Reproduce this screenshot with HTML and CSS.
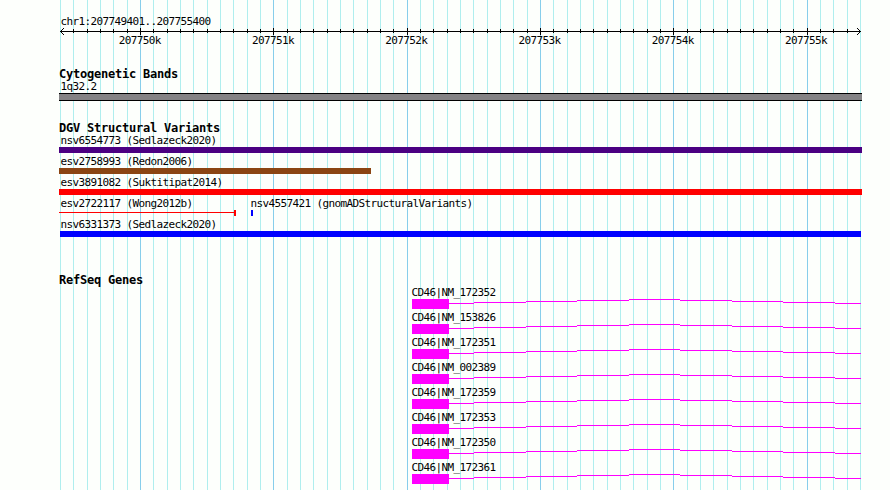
FILE: index.html
```html
<!DOCTYPE html>
<html lang="en">
<head>
    <meta charset="UTF-8">
    <title>chr1:207749401..207755400</title>
    <link rel="stylesheet" href="styles.css">
</head>
<body>
    <div class="browser">
        <svg class="grid" id="grid" width="890" height="490" shape-rendering="crispEdges"></svg>
        <div class="panel">
            <div class="ruler">
                <div class="label">chr1:207749401..207755400</div>
                <svg id="ruler" width="803" height="8" shape-rendering="crispEdges"></svg>
                <div class="scale">
                    <span>207750k</span>
                    <span>207751k</span>
                    <span>207752k</span>
                    <span>207753k</span>
                    <span>207754k</span>
                    <span>207755k</span>
                </div>
            </div>
            <div class="track bands">
                <h2>Cytogenetic Bands</h2>
                <div class="label">1q32.2</div>
                <div class="band"></div>
            </div>
            <div class="track variants">
                <h2>DGV Structural Variants</h2>
                <div class="row">
                    <div class="label">nsv6554773 (Sedlazeck2020)</div>
                    <div class="bar indigo"></div>
                </div>
                <div class="row">
                    <div class="label">esv2758993 (Redon2006)</div>
                    <div class="bar brown"></div>
                </div>
                <div class="row">
                    <div class="label">esv3891082 (Suktitipat2014)</div>
                    <div class="bar red"></div>
                </div>
                <div class="row pair">
                    <div class="first">
                        <div class="label">esv2722117 (Wong2012b)</div>
                        <div class="span"></div>
                    </div>
                    <div>
                        <div class="label">nsv4557421 (gnomADStructuralVariants)</div>
                        <div class="bar small"></div>
                    </div>
                </div>
                <div class="row">
                    <div class="label">nsv6331373 (Sedlazeck2020)</div>
                    <div class="bar blue"></div>
                </div>
            </div>
            <div class="track genes">
                <h2>RefSeq Genes</h2>
                <div id="genes"></div>
            </div>
        </div>
    </div>
    <script src="script.js"></script>
</body>
</html>
```

FILE: styles.css
```css
body {
    margin: 0;
    background: #fdfffc;
    color: #000;
    font-family: 'DejaVu Sans Mono', monospace;
    font-size: 11px;
    letter-spacing: -0.62px;
    overflow: hidden;
}
.browser {
    position: relative;
    width: 890px;
    height: 490px;
    overflow: hidden;
}
.grid {
    position: absolute;
    top: 0;
    left: 0;
}
.panel {
    position: relative;
    width: 803px;
    padding: 14px 0 0 59px;
}
svg {
    display: block;
}
h2 {
    margin: 0;
    height: 13px;
    font-size: 12px;
    line-height: 13px;
    letter-spacing: -0.22px;
    white-space: nowrap;
}
.label {
    height: 14px;
    padding-left: 1.5px;
    line-height: 16px;
    white-space: nowrap;
}
.ruler {
    height: 54px;
}
.scale {
    display: grid;
    grid-template-columns: repeat(6, 133.3px);
    padding-left: 14px;
    margin-top: -2px;
    line-height: 14px;
    text-align: center;
}
.bands {
    height: 54px;
}
.bands .label {
    height: 12px;
    line-height: 12px;
}
.band {
    height: 6px;
    background: #848284;
    border-top: 1px solid #000;
    border-bottom: 1px solid #000;
}
.variants {
    height: 152px;
}
.variants h2 {
    height: 11px;
}
.row {
    height: 21px;
}
.bar {
    height: 6px;
}
.indigo {
    background: #4b0082;
}
.brown {
    width: 312px;
    background: #8b4513;
}
.red {
    background: #f00;
}
.blue {
    margin: 0 1px;
    background: #00f;
}
.pair {
    display: flex;
}
.first {
    width: 190px;
}
.small {
    width: 2px;
    margin-left: 2px;
    background: #00f;
}
.span {
    width: 175px;
    height: 6px;
    border-right: 2px solid #f00;
    background: linear-gradient(#f00, #f00) 0 2px / 100% 1px no-repeat;
}
.gene {
    height: 25px;
    margin-left: 352px;
}
.gene .label {
    height: 12px;
    line-height: 12px;
    padding-left: 0.5px;
}
```

FILE: script.js
```javascript
const genes = ['172352', '153826', '172351', '002389', '172359', '172353', '172350', '172361'];

let lines = '';
let ticks = '';
for (let i = 0; i <= 60; i++) {
    const x = Math.round(60 + i * 40 / 3);
    const major = i % 10 === 6;
    lines += `<rect x="${x}" y="0" width="1" height="490" fill="${major ? '#87ceeb' : '#afeeee'}"/>`;
    if (i > 0 && i < 60) {
        ticks += `<rect x="${x - 59}" y="${major ? 0 : 1}" width="1" height="${major ? 7 : 4}"/>`;
    }
}
document.getElementById('grid').innerHTML = lines;

// Axis line with an open arrowhead at each end
document.getElementById('ruler').innerHTML = `
    <rect x="1" y="3" width="801" height="1"/>
    ${ticks}
    <path d="M2 2h1v1h-1zM3 1h1v1h-1zM4 0h1v1h-1zM2 4h1v1h-1zM3 5h1v1h-1zM4 6h1v1h-1z"/>
    <path d="M800 2h1v1h-1zM799 1h1v1h-1zM798 0h1v1h-1zM800 4h1v1h-1zM799 5h1v1h-1zM798 6h1v1h-1z"/>`;

// Exon box followed by the stepped intron line
document.getElementById('genes').innerHTML = genes.map(id => `
    <div class="gene">
        <div class="label">CD46|NM_${id}</div>
        <svg width="451" height="10" fill="#f0f" shape-rendering="crispEdges">
            <path d="M1 0h37v10h-37zM38 4h25v1h-25zM63 3h52v1h-52zM115 2h51v1h-51zM166 1h52v1h-52zM218 0h51v1h-51zM269 1h52v1h-52zM321 2h51v1h-51zM372 3h52v1h-52zM424 4h26v1h-26z"/>
        </svg>
    </div>`).join('');
```
